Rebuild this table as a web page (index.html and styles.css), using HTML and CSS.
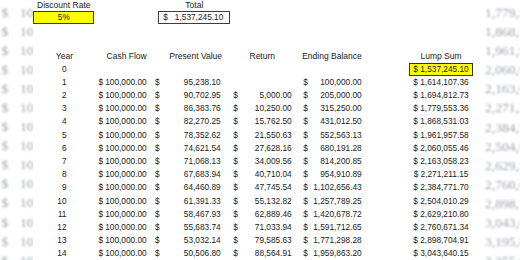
FILE: index.html
```html
<!DOCTYPE html>
<html lang="en">
<head>
  <meta charset="UTF-8">
  <title>Lump Sum</title>
  <link rel="stylesheet" href="styles.css">
</head>
<body>

  <div class="ghost ghost-left">
    <div class="g-row"><span class="g-cur">$</span><span>10</span></div>
    <div class="g-row"><span class="g-cur">$</span><span>10</span></div>
    <div class="g-row"><span class="g-cur">$</span><span>10</span></div>
    <div class="g-row"><span class="g-cur">$</span><span>10</span></div>
    <div class="g-row"><span class="g-cur">$</span><span>10</span></div>
    <div class="g-row"><span class="g-cur">$</span><span>10</span></div>
    <div class="g-row"><span class="g-cur">$</span><span>10</span></div>
    <div class="g-row"><span class="g-cur">$</span><span>10</span></div>
    <div class="g-row"><span class="g-cur">$</span><span>10</span></div>
    <div class="g-row"><span class="g-cur">$</span><span>10</span></div>
    <div class="g-row"><span class="g-cur">$</span><span>10</span></div>
    <div class="g-row"><span class="g-cur">$</span><span>10</span></div>
    <div class="g-row"><span class="g-cur">$</span><span>10</span></div>
    <div class="g-row"><span class="g-cur">$</span><span>10</span></div>
  </div>

  <div class="ghost ghost-right">
    <div class="g-row">1,779,553.36</div>
    <div class="g-row">1,868,531.03</div>
    <div class="g-row">1,961,957.58</div>
    <div class="g-row">2,060,055.46</div>
    <div class="g-row">2,163,058.23</div>
    <div class="g-row">2,271,211.15</div>
    <div class="g-row">2,384,771.70</div>
    <div class="g-row">2,504,010.29</div>
    <div class="g-row">2,629,210.80</div>
    <div class="g-row">2,760,671.34</div>
    <div class="g-row">2,898,704.91</div>
    <div class="g-row">3,043,640.15</div>
    <div class="g-row">3,195,822.16</div>
    <div class="g-row">3,355,613.27</div>
  </div>

  <div class="panel">
    <div class="inputs">
      <div class="field field-rate">
        <div class="label">Discount Rate</div>
        <div class="box box-yellow">5%</div>
      </div>
      <div class="field field-total">
        <div class="label">Total</div>
        <div class="box box-money"><span>$</span><span>1,537,245.10</span></div>
      </div>
    </div>

    <div class="table">
      <div class="row head">
        <div class="yr">Year</div>
        <div class="cf">Cash Flow</div>
        <div class="pv">Present Value</div>
        <div class="rt">Return</div>
        <div class="eb">Ending Balance</div>
        <div class="ls">Lump Sum</div>
      </div>
      <div class="row">
        <div class="yr">0</div>
        <div class="cf"></div>
        <div class="pv"></div>
        <div class="rt"></div>
        <div class="eb"></div>
        <div class="ls hl">$ 1,537,245.10</div>
      </div>
      <div class="row">
        <div class="yr">1</div>
        <div class="cf"><span>$</span><span>100,000.00</span></div>
        <div class="pv"><span>$</span><span>95,238.10</span></div>
        <div class="rt"></div>
        <div class="eb"><span>$</span><span>100,000.00</span></div>
        <div class="ls">$ 1,614,107.36</div>
      </div>
      <div class="row">
        <div class="yr">2</div>
        <div class="cf"><span>$</span><span>100,000.00</span></div>
        <div class="pv"><span>$</span><span>90,702.95</span></div>
        <div class="rt"><span>$</span><span>5,000.00</span></div>
        <div class="eb"><span>$</span><span>205,000.00</span></div>
        <div class="ls">$ 1,694,812.73</div>
      </div>
      <div class="row">
        <div class="yr">3</div>
        <div class="cf"><span>$</span><span>100,000.00</span></div>
        <div class="pv"><span>$</span><span>86,383.76</span></div>
        <div class="rt"><span>$</span><span>10,250.00</span></div>
        <div class="eb"><span>$</span><span>315,250.00</span></div>
        <div class="ls">$ 1,779,553.36</div>
      </div>
      <div class="row">
        <div class="yr">4</div>
        <div class="cf"><span>$</span><span>100,000.00</span></div>
        <div class="pv"><span>$</span><span>82,270.25</span></div>
        <div class="rt"><span>$</span><span>15,762.50</span></div>
        <div class="eb"><span>$</span><span>431,012.50</span></div>
        <div class="ls">$ 1,868,531.03</div>
      </div>
      <div class="row">
        <div class="yr">5</div>
        <div class="cf"><span>$</span><span>100,000.00</span></div>
        <div class="pv"><span>$</span><span>78,352.62</span></div>
        <div class="rt"><span>$</span><span>21,550.63</span></div>
        <div class="eb"><span>$</span><span>552,563.13</span></div>
        <div class="ls">$ 1,961,957.58</div>
      </div>
      <div class="row">
        <div class="yr">6</div>
        <div class="cf"><span>$</span><span>100,000.00</span></div>
        <div class="pv"><span>$</span><span>74,621.54</span></div>
        <div class="rt"><span>$</span><span>27,628.16</span></div>
        <div class="eb"><span>$</span><span>680,191.28</span></div>
        <div class="ls">$ 2,060,055.46</div>
      </div>
      <div class="row">
        <div class="yr">7</div>
        <div class="cf"><span>$</span><span>100,000.00</span></div>
        <div class="pv"><span>$</span><span>71,068.13</span></div>
        <div class="rt"><span>$</span><span>34,009.56</span></div>
        <div class="eb"><span>$</span><span>814,200.85</span></div>
        <div class="ls">$ 2,163,058.23</div>
      </div>
      <div class="row">
        <div class="yr">8</div>
        <div class="cf"><span>$</span><span>100,000.00</span></div>
        <div class="pv"><span>$</span><span>67,683.94</span></div>
        <div class="rt"><span>$</span><span>40,710.04</span></div>
        <div class="eb"><span>$</span><span>954,910.89</span></div>
        <div class="ls">$ 2,271,211.15</div>
      </div>
      <div class="row">
        <div class="yr">9</div>
        <div class="cf"><span>$</span><span>100,000.00</span></div>
        <div class="pv"><span>$</span><span>64,460.89</span></div>
        <div class="rt"><span>$</span><span>47,745.54</span></div>
        <div class="eb"><span>$</span><span>1,102,656.43</span></div>
        <div class="ls">$ 2,384,771.70</div>
      </div>
      <div class="row">
        <div class="yr">10</div>
        <div class="cf"><span>$</span><span>100,000.00</span></div>
        <div class="pv"><span>$</span><span>61,391.33</span></div>
        <div class="rt"><span>$</span><span>55,132.82</span></div>
        <div class="eb"><span>$</span><span>1,257,789.25</span></div>
        <div class="ls">$ 2,504,010.29</div>
      </div>
      <div class="row">
        <div class="yr">11</div>
        <div class="cf"><span>$</span><span>100,000.00</span></div>
        <div class="pv"><span>$</span><span>58,467.93</span></div>
        <div class="rt"><span>$</span><span>62,889.46</span></div>
        <div class="eb"><span>$</span><span>1,420,678.72</span></div>
        <div class="ls">$ 2,629,210.80</div>
      </div>
      <div class="row">
        <div class="yr">12</div>
        <div class="cf"><span>$</span><span>100,000.00</span></div>
        <div class="pv"><span>$</span><span>55,683.74</span></div>
        <div class="rt"><span>$</span><span>71,033.94</span></div>
        <div class="eb"><span>$</span><span>1,591,712.65</span></div>
        <div class="ls">$ 2,760,671.34</div>
      </div>
      <div class="row">
        <div class="yr">13</div>
        <div class="cf"><span>$</span><span>100,000.00</span></div>
        <div class="pv"><span>$</span><span>53,032.14</span></div>
        <div class="rt"><span>$</span><span>79,585.63</span></div>
        <div class="eb"><span>$</span><span>1,771,298.28</span></div>
        <div class="ls">$ 2,898,704.91</div>
      </div>
      <div class="row">
        <div class="yr">14</div>
        <div class="cf"><span>$</span><span>100,000.00</span></div>
        <div class="pv"><span>$</span><span>50,506.80</span></div>
        <div class="rt"><span>$</span><span>88,564.91</span></div>
        <div class="eb"><span>$</span><span>1,959,863.20</span></div>
        <div class="ls">$ 3,043,640.15</div>
      </div>
    </div>
  </div>

</body>
</html>
```

FILE: styles.css
```css
/* sheet */
body, html {
  height: 100%;
  margin: 0;
  overflow: hidden;
}

html {
  background: #fff;
}

body {
  font-family: "Liberation Sans", Arial, sans-serif;
  font-size: 8.3px;
  color: #1a1a1a;
}

/* blurred sheet behind the panel */
.ghost {
  position: absolute;
  top: 0;
  z-index: 0;
  font-family: "Liberation Serif", serif;
  font-size: 13.5px;
  color: #9ea4ae;
  filter: blur(0.8px);
  white-space: nowrap;
}

.ghost-left {
  left: 0;
  padding-top: 2.5px;
}

.ghost-right {
  left: 485px;
  width: 35px;
  overflow: hidden;
  padding-top: 3px;
}

.g-row {
  height: 19.1px;
  line-height: 19.1px;
  display: flex;
}

.g-cur {
  width: 20px;
  padding-left: 1.5px;
  box-sizing: border-box;
}

.panel {
  position: relative;
  z-index: 1;
  margin-left: 33px;
  width: 450px;
  height: 100%;
  background: #fff;
}

/* inputs */
.inputs {
  display: flex;
  gap: 64px;
  padding-left: 0.3px;
}

.field {
  display: flex;
  flex-direction: column;
  align-items: center;
}

.field-rate {
  width: 61px;
}

.field-total {
  width: 72px;
}

.label {
  height: 10px;
  line-height: 10px;
  font-size: 8.5px;
}

.box {
  box-sizing: border-box;
  width: 100%;
  height: 13px;
  line-height: 11px;
  margin-top: 0.5px;
  border: 1px solid #3c3c3c;
}

.box-yellow {
  background: #ffff00;
  text-align: center;
}

.box-money {
  display: flex;
  justify-content: space-between;
  padding: 0 6px 0 4px;
}

/* table */
.table {
  margin-top: 26px;
  padding-left: 7px;
}

.row {
  display: grid;
  grid-template-columns: 56px 55px 76px 70px 69px 43px 64px;
  height: 13.2px;
  line-height: 13.2px;
}

.row > div {
  display: flex;
  justify-content: space-between;
  white-space: nowrap;
}

.yr {
  justify-content: flex-end !important;
  padding-right: 29.5px;
}

.cf { padding: 0 4.3px 0 2.5px; }
.pv { padding: 0 6.3px 0 4px; }
.rt { padding: 0 5.3px 0 6.3px; }
.eb { padding: 0 4.3px 0 6.3px; }

.ls {
  grid-column: 7;
  justify-content: center !important;
}

.hl {
  box-sizing: border-box;
  background: #ffff00;
  border: 1px solid #333;
  line-height: 11.2px;
}

.head > div { font-size: 8.5px; }
.head .yr { padding-right: 23px; }
.head .cf { justify-content: flex-end; }
.head .pv { justify-content: flex-end; padding-right: 5px; }
.head .rt { padding-left: 22.5px; }
.head .eb { justify-content: flex-end; }
```
